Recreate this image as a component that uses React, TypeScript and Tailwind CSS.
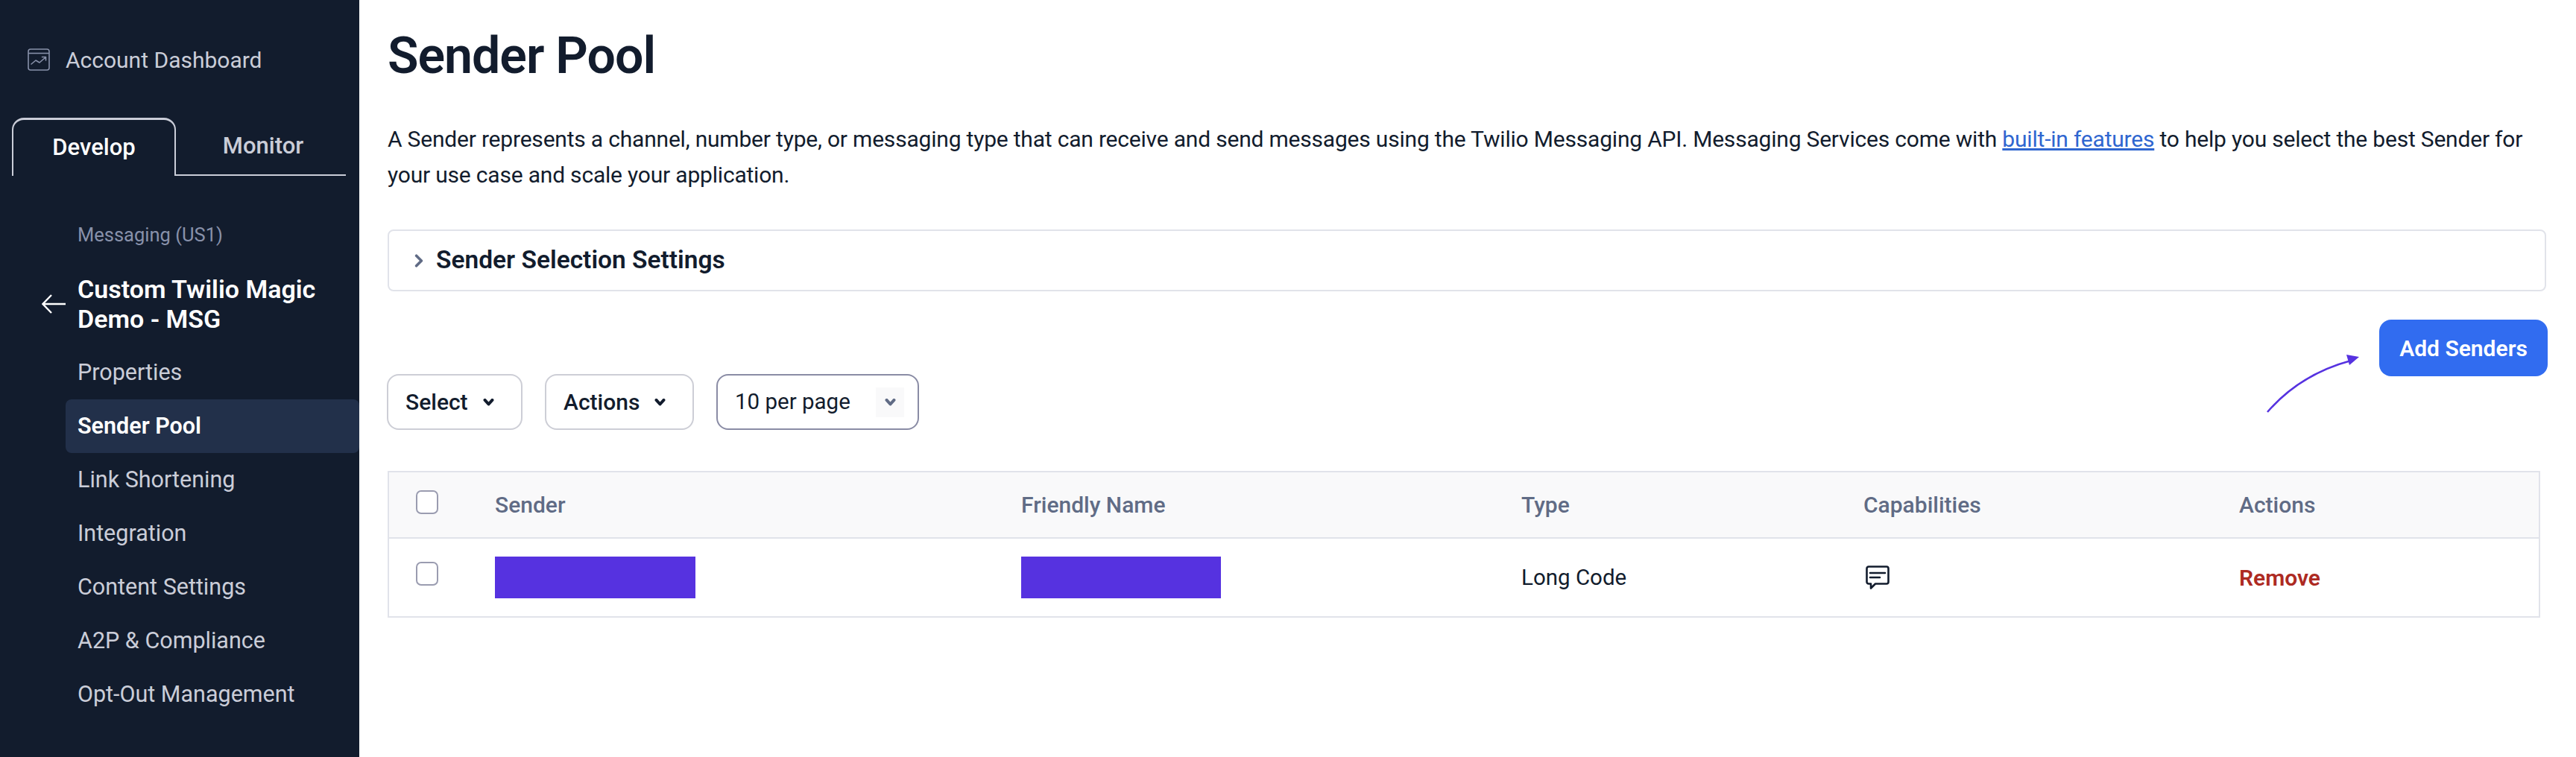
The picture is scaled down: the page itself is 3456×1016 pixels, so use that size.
import React from 'react';

const navItems = ['Properties', 'Sender Pool', 'Link Shortening', 'Integration', 'Content Settings', 'A2P & Compliance', 'Opt-Out Management'];

const Chevron = ({ className }: { className: string }) => (
  <svg viewBox="0 0 12 8" fill="none" stroke="currentColor" strokeWidth="3.2" strokeLinecap="round" strokeLinejoin="round" className={className}>
    <path d="M2 1.5 6 6l4-4.5" />
  </svg>
);

const Checkbox = () => <div className="h-[32px] w-[30px] rounded-[7px] border-2 border-[#9a9cb0] bg-white" />;

const App: React.FC = () => {
  return (
    <div className="flex h-screen w-full overflow-hidden bg-white font-['Roboto',sans-serif] text-[#121c2d]">
      {/* Sidebar */}
      <aside className="flex w-[482px] shrink-0 flex-col bg-[#121c2d]">
        <div className="mt-[64px] flex h-[32px] items-center pl-[37px] text-[30px] text-[#cacdd8]">
          <svg viewBox="0 0 30 30" fill="none" stroke="#8891aa" strokeWidth="1.6" className="mr-[21px] h-[30px] w-[30px]">
            <rect x="1" y="1" width="28" height="28" rx="3" />
            <path d="M1 6.5h28" />
            <path d="M5 21l6-5 5 3 8-7M19.5 11.5H24.5V16" strokeLinecap="round" strokeLinejoin="round" />
          </svg>
          Account Dashboard
        </div>

        <div className="mt-[62px] flex h-[78px] pl-[16px] text-[31px] font-medium">
          <div className="flex w-[220px] items-center justify-center rounded-t-[16px] border-x-2 border-t-[3px] border-[#cacdd8] text-white">Develop</div>
          <div className="flex w-[228px] items-center justify-center border-b-2 border-[#cacdd8] pl-[6px] text-[#cacdd8]">Monitor</div>
        </div>

        <div className="mt-[62px] pl-[104px] text-[25.5px] leading-[34px] text-[#8891aa]">Messaging (US1)</div>

        <div className="mt-[36px] flex items-center">
          <svg viewBox="0 0 32 26" fill="none" stroke="white" strokeWidth="2.4" className="ml-[56px] mr-[16px] h-[26px] w-[32px]">
            <path d="M32 13H2M13 1 1.5 13 13 25" />
          </svg>
          <div className="text-[34px] font-semibold leading-[40px] text-white">
            Custom Twilio Magic
            <br />
            Demo - MSG
          </div>
        </div>

        <nav className="mt-[16px] flex flex-col pl-[88px] text-[30.5px] text-[#cacdd8]">
          {navItems.map((item) =>
            item === 'Sender Pool' ? (
              <div key={item} className="flex h-[72px] items-center rounded-[8px] bg-[#22304a] pl-[16px] font-semibold text-white">
                {item}
              </div>
            ) : (
              <div key={item} className="flex h-[72px] items-center pl-[16px]">
                {item}
              </div>
            )
          )}
        </nav>
      </aside>

      {/* Main content */}
      <main className="relative flex-1 pl-[38px] pr-[40px]">
        <h1 className="mt-[34px] text-[68px] font-semibold leading-[82px] tracking-[-1px]">Sender Pool</h1>

        <p className="mt-[47px] text-[30px] leading-[48px] tracking-[-0.2px]">
          A Sender represents a channel, number type, or messaging type that can receive and send messages using the Twilio Messaging API. Messaging Services come with{' '}
          <span className="text-[#2f66d0] underline">built-in features</span> to help you select the best Sender for your use case and scale your application.
        </p>

        <div className="mt-[49px] flex h-[83px] items-center rounded-[8px] border-2 border-[#e1e3ea] pl-[34px]">
          <svg viewBox="0 0 10 16" fill="none" stroke="#606b85" strokeWidth="3.2" strokeLinecap="round" strokeLinejoin="round" className="mr-[17px] h-[18px] w-[12px]">
            <path d="M2 2l6 6-6 6" />
          </svg>
          <span className="text-[33.5px] font-semibold">Sender Selection Settings</span>
        </div>

        {/* Toolbar */}
        <div className="mt-[39px] flex h-[147px] items-end justify-between">
          <div className="ml-[-1px] flex gap-[30px] text-[30px] font-medium">
            <button className="flex h-[75px] w-[182px] items-center rounded-[16px] border-2 border-[#cdced6] pl-[23px]">
              Select
              <Chevron className="ml-[20px] h-[10px] w-[15px]" />
            </button>
            <button className="flex h-[75px] w-[200px] items-center rounded-[16px] border-2 border-[#cdced6] pl-[23px]">
              Actions
              <Chevron className="ml-[20px] h-[10px] w-[15px]" />
            </button>
            <div className="flex h-[75px] w-[272px] items-center justify-between rounded-[16px] border-2 border-[#8a8ca5] pl-[23px] pr-[18px] font-normal">
              <span className="text-[29.5px]">10 per page</span>
              <span className="flex h-[40px] w-[38px] items-center justify-center bg-[#f9f9fa] text-[#606b85]">
                <Chevron className="h-[10px] w-[15px]" />
              </span>
            </div>
          </div>
          <button className="mb-[72px] mr-[-2px] flex h-[76px] w-[226px] items-center justify-center rounded-[16px] bg-[#316cf0] text-[30px] font-semibold text-white">
            Add Senders
          </button>
        </div>

        {/* Annotation arrow */}
        <svg viewBox="0 0 130 80" fill="none" className="absolute left-[2558px] top-[476px] h-[80px] w-[130px]">
          <path d="M2 77C28 47 62 22 114 8" stroke="#5632e0" strokeWidth="2.6" />
          <path d="M125 3 108 0l4 14Z" fill="#5632e0" />
        </svg>

        {/* Senders table */}
        <div className="mt-[55px] mr-[8px] border-2 border-[#e1e3ea]">
          <div className="grid h-[89px] grid-cols-[142px_706px_671px_459px_504px_1fr] items-center border-b-2 border-[#e1e3ea] bg-[#f9f9fa] text-[30px] font-medium text-[#606b85]">
            <div className="pl-[36px] pb-[8px]">
              <Checkbox />
            </div>
            <div>Sender</div>
            <div>Friendly Name</div>
            <div>Type</div>
            <div>Capabilities</div>
            <div>Actions</div>
          </div>
          <div className="grid h-[104px] grid-cols-[142px_706px_671px_459px_504px_1fr] items-center text-[29.5px]">
            <div className="pl-[36px] pb-[10px]">
              <Checkbox />
            </div>
            <div>
              <div className="h-[56px] w-[269px] bg-[#5632e0]" />
            </div>
            <div>
              <div className="h-[56px] w-[268px] bg-[#5632e0]" />
            </div>
            <div>Long Code</div>
            <div>
              <svg viewBox="0 0 32 32" fill="none" stroke="#121c2d" strokeWidth="2.6" className="ml-[3px] h-[32px] w-[32px]">
                <path d="M4 1.5h24a2.5 2.5 0 0 1 2.5 2.5v18a2.5 2.5 0 0 1-2.5 2.5H13L7 30.5v-6H4A2.5 2.5 0 0 1 1.5 22V4A2.5 2.5 0 0 1 4 1.5Z" strokeLinejoin="round" />
                <path d="M6 10h20M6 16h13" strokeLinecap="round" />
              </svg>
            </div>
            <div className="text-[30px] font-semibold text-[#ad2a22]">Remove</div>
          </div>
        </div>
      </main>
    </div>
  );
};

export default App;
